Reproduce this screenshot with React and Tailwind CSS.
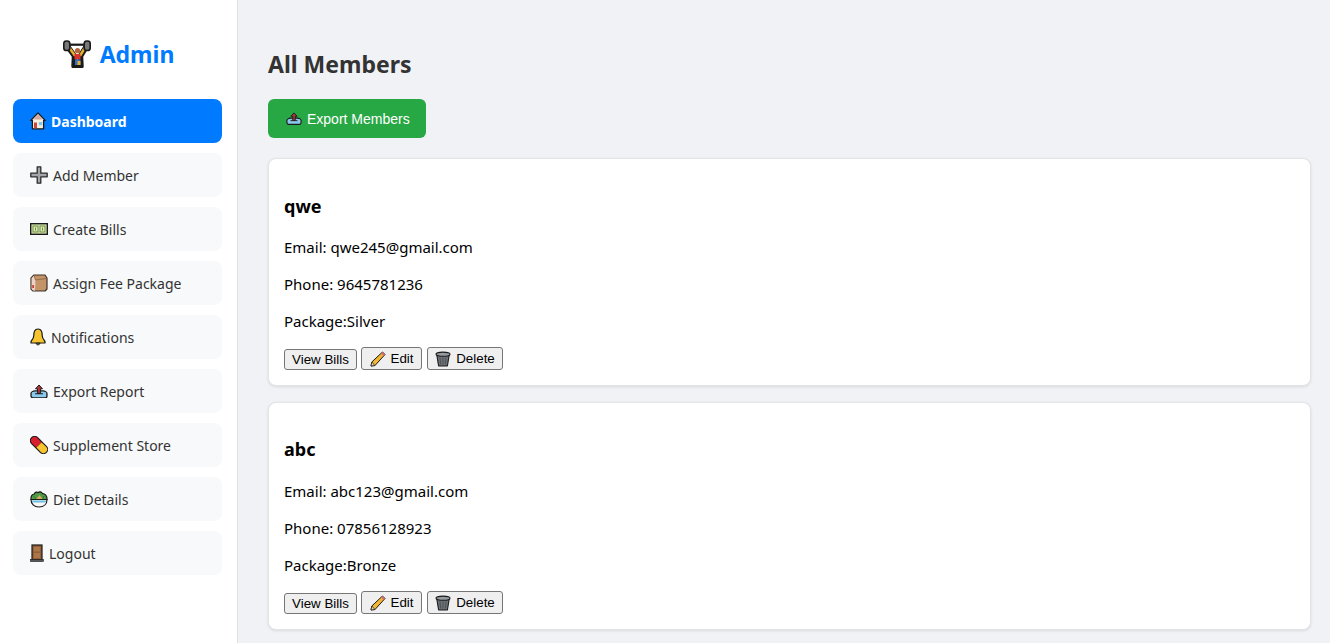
const K = "#1a1a1a";

const Lifter = () => (
  <svg width="28" height="28" viewBox="0 0 28 28" className="shrink-0">
    <path d="M5 7 L11.5 16 L11 26 L18 26 L17.5 16 L23 7" fill="none" stroke={K} strokeWidth="5.4" strokeLinejoin="round" />
    <path d="M5 6 L11.5 15 L17.5 15 L23 6" fill="none" stroke="#e9ae2f" strokeWidth="2.6" />
    <rect x="4" y="3.6" width="20" height="2.2" fill={K} />
    <rect x="0.8" y="1" width="6" height="9.5" rx="2.6" fill="#77787a" stroke={K} strokeWidth="1.6" />
    <rect x="21.2" y="1" width="6" height="9.5" rx="2.6" fill="#77787a" stroke={K} strokeWidth="1.6" />
    <circle cx="14.5" cy="10.5" r="2.6" fill="#b5673c" />
    <rect x="11.5" y="14" width="6" height="5.5" fill="#d8332c" />
    <rect x="12" y="19.5" width="5.5" height="5.5" fill="#2f6fc4" />
    <rect x="14.5" y="21" width="3" height="4" fill="#e9ae2f" />
  </svg>
);

const House = () => (
  <svg width="16" height="18" viewBox="0 0 16 18" className="shrink-0">
    <path d="M8 1 L15.2 8.4 L13.6 8.4 L13.6 16.8 L2.4 16.8 L2.4 8.4 L0.8 8.4 Z" fill="#f6efe2" stroke={K} strokeWidth="1.3" strokeLinejoin="round" />
    <path d="M8 2.6 L12.6 7.4 H3.4 Z" fill="#d9a79c" />
    <rect x="4" y="10.5" width="3" height="5.8" fill="#c9473d" />
    <rect x="8.8" y="10" width="3.4" height="3.2" fill="#7cc8e6" />
  </svg>
);

const Plus = () => (
  <svg width="18" height="18" viewBox="0 0 18 18" className="shrink-0">
    <path d="M7.2 0.8 H10.8 V7.2 H17.2 V10.8 H10.8 V17.2 H7.2 V10.8 H0.8 V7.2 H7.2 Z" fill="#a2a6aa" stroke="#2b2b2b" strokeWidth="1.3" strokeLinejoin="round" />
  </svg>
);

const Bill = () => (
  <svg width="18" height="12" viewBox="0 0 18 12" className="shrink-0">
    <rect x="0.7" y="0.7" width="16.6" height="10.6" fill="#dcebb0" stroke={K} strokeWidth="1.4" />
    <rect x="3" y="3" width="5" height="6" fill="none" stroke="#6e8a4a" strokeWidth="1" />
    <rect x="10" y="3" width="5" height="6" fill="none" stroke="#6e8a4a" strokeWidth="1" />
    <path d="M5.5 4.5 V7.5 M12.5 4.5 V7.5" stroke="#6e8a4a" strokeWidth="1" />
  </svg>
);

const Box = () => (
  <svg width="18" height="18" viewBox="0 0 18 18" className="shrink-0">
    <path d="M1 4 L4 1 L15 1 L17 4 L17 15 L15 17 L3 17 L1 15 Z" fill="#c49468" stroke="#3d3028" strokeWidth="1.2" strokeLinejoin="round" />
    <path d="M1.6 4 L4.2 1.6 L5.5 6 L5 16.4 L3 16.4 L1.6 15 Z" fill="#ecd2c6" />
    <path d="M5.5 6 L16.5 4.5 M4.2 1.6 L5.5 6" stroke="#8d6a45" strokeWidth="0.9" fill="none" />
    <rect x="2.2" y="11" width="1.8" height="3" fill="#c9473d" />
  </svg>
);

const Bell = () => (
  <svg width="16" height="18" viewBox="0 0 16 18" className="shrink-0">
    <path d="M8 1 C4.5 1 3.8 4 3.8 7.5 C3.8 10.5 2.2 12 1 13.4 L1 15 H15 L15 13.4 C13.8 12 12.2 10.5 12.2 7.5 C12.2 4 11.5 1 8 1 Z" fill="#f6c42f" stroke={K} strokeWidth="1.2" strokeLinejoin="round" />
    <path d="M6 15.2 C6.5 17.4 9.5 17.4 10 15.2 Z" fill="#c48b1c" stroke={K} strokeWidth="1" />
  </svg>
);

const Outbox = ({ size = 18 }) => (
  <svg width={size} height={size * 0.83} viewBox="0 0 18 15" className="shrink-0">
    <path d="M1 9.5 C1 8.2 3 7 5 7 H13 C15 7 17 8.2 17 9.5 V12 C17 13 16 14 15 14 H3 C2 14 1 13 1 12 Z" fill="#8cc8ec" stroke={K} strokeWidth="1.3" strokeLinejoin="round" />
    <path d="M5 9.8 H13" stroke={K} strokeWidth="1" />
    <path d="M9 1 L12.5 4.8 H10.4 V9.5 H7.6 V4.8 H5.5 Z" fill="#b4333a" stroke={K} strokeWidth="1" strokeLinejoin="round" />
  </svg>
);

const Pill = () => (
  <svg width="18" height="18" viewBox="0 0 18 18" className="shrink-0">
    <g transform="rotate(45 9 9)">
      <rect x="-2" y="4.2" width="22" height="9.6" rx="4.8" fill={K} />
      <path d="M9 5.3 H2.8 A3.7 3.7 0 0 0 2.8 12.7 H9 Z" fill="#d81f2e" />
      <path d="M9 5.3 H15.2 A3.7 3.7 0 0 1 15.2 12.7 H9 Z" fill="#f6c42f" />
    </g>
  </svg>
);

const Salad = () => (
  <svg width="18" height="18" viewBox="0 0 18 18" className="shrink-0">
    <path d="M1 9.5 C0.6 6 2.4 4 4.4 4 C5 2 7 1.6 8 2.6 C9.4 1.2 11.6 1.8 12.4 3.6 C14.8 3.4 17.4 6 17 9.5 Z" fill="#4f9c47" stroke={K} strokeWidth="1.2" strokeLinejoin="round" />
    <path d="M6.5 9 L9.5 5 L12.5 9 Z" fill="#dba765" />
    <path d="M4 6.5 L5.5 8.5 M14 6 L13 8.5" stroke="#2f6e2b" strokeWidth="1" />
    <path d="M1 9.5 H17 C17 14 14 17 9 17 C4 17 1 14 1 9.5 Z" fill="#f7f7f7" stroke={K} strokeWidth="1.2" />
    <path d="M1.8 10.4 H16.2 L15.4 12.4 H2.6 Z" fill="#6bbfde" />
  </svg>
);

const Door = () => (
  <svg width="14" height="18" viewBox="0 0 14 18" className="shrink-0">
    <rect x="2" y="1" width="10" height="15" fill="#94603a" stroke={K} strokeWidth="1.2" />
    <rect x="4" y="3" width="6" height="4.4" fill="#ad7648" />
    <rect x="4" y="9" width="6" height="5" fill="#ad7648" />
    <rect x="0.5" y="15.5" width="13" height="2" fill="#55565a" stroke={K} strokeWidth="0.6" />
  </svg>
);

const PencilIcon = () => (
  <svg width="16" height="16" viewBox="0 0 16 16" className="shrink-0">
    <path d="M12.5 1 L15 3.5 L5 14.5 L1 15 L1.8 11 Z" fill="#f2b632" stroke={K} strokeWidth="1" strokeLinejoin="round" />
    <path d="M1.8 11 L5 14.5 L1 15 Z" fill="#ecd6a8" stroke={K} strokeWidth="0.7" />
    <path d="M12.5 1 L15 3.5 L13.6 5 L11.1 2.5 Z" fill="#d66b73" />
  </svg>
);

const Trash = () => (
  <svg width="16" height="16" viewBox="0 0 16 16" className="shrink-0">
    <path d="M1.8 4 H14.2 L12.4 15 H3.6 Z" fill="#6c7277" stroke={K} strokeWidth="1.1" strokeLinejoin="round" />
    <ellipse cx="8" cy="3.2" rx="7" ry="2.1" fill="#969ba0" stroke={K} strokeWidth="1.1" />
    <path d="M5 6.5 L5.7 13.5 M8 6.5 V13.5 M11 6.5 L10.3 13.5" stroke="#44494d" strokeWidth="0.8" />
  </svg>
);

const nav = [
  { Icon: House, label: "Dashboard", active: true },
  { Icon: Plus, label: "Add Member" },
  { Icon: Bill, label: "Create Bills" },
  { Icon: Box, label: "Assign Fee Package" },
  { Icon: Bell, label: "Notifications" },
  { Icon: Outbox, label: "Export Report" },
  { Icon: Pill, label: "Supplement Store" },
  { Icon: Salad, label: "Diet Details" },
  { Icon: Door, label: "Logout" },
];

const members = [
  { name: "qwe", email: "qwe245@gmail.com", phone: "9645781236", pkg: "Silver" },
  { name: "abc", email: "abc123@gmail.com", phone: "07856128923", pkg: "Bronze" },
];

const btn =
  "flex items-center justify-center gap-[5px] bg-[#efefef] border border-[#767676] rounded-[3px] text-[13.33px] text-black font-['Liberation_Sans',sans-serif]";

function Card({ m }) {
  return (
    <div className="bg-white rounded-lg border border-[#e3e4e6] shadow-[0_1px_3px_rgba(0,0,0,0.1)] h-[228px] px-[15px] pt-[34.7px] text-[15px] leading-[20px] text-black">
      <h3 className="text-[18px] leading-[24px] font-bold">{m.name}</h3>
      <p className="mt-[19.3px]">Email: {m.email}</p>
      <p className="mt-[17px]">Phone: {m.phone}</p>
      <p className="mt-[17px]">Package:{m.pkg}</p>
      <div className="flex items-start mt-[16px]">
        <button className={`${btn} pt-[1px] w-[73px] h-[21px] mt-[2px]`}>View Bills</button>
        <button className={`${btn} pt-[2px] w-[61px] h-[23px] ml-[4px]`}><PencilIcon />Edit</button>
        <button className={`${btn} pt-[2px] w-[76px] h-[23px] ml-[5px]`}><Trash />Delete</button>
      </div>
    </div>
  );
}

export default function App() {
  return (
    <div className="flex h-[643px] overflow-hidden bg-[#f0f2f5] font-['Noto_Sans','Open_Sans',sans-serif]">
      <aside className="w-[238px] shrink-0 bg-white border-r border-[#dfe1e5] pl-[13px] pr-[15px] pt-[38px]">
        <div className="flex items-center justify-center gap-[9px] h-[32px] mb-[29px] pl-[2px]">
          <Lifter />
          <span className="text-[23px] leading-[32px] font-bold text-[#007bff]">Admin</span>
        </div>
        <nav className="flex flex-col gap-[10px]">
          {nav.map(({ Icon, label, active }) => (
            <div
              key={label}
              className={`flex items-center gap-[5px] h-[44px] pl-[17px] rounded-lg text-sm ${
                active ? "bg-[#007bff] text-white font-bold" : "bg-[#f8f9fa] text-[#333333]"
              }`}
            >
              <Icon />
              <span className="pt-[2px]">{label}</span>
            </div>
          ))}
        </nav>
      </aside>
      <main className="flex-1 min-w-0 pl-[30px] pr-[19px] pt-[48px]">
        <h2 className="text-[23px] leading-[32px] font-bold text-[#333333]">All Members</h2>
        <button className="flex items-center gap-[5px] w-[158px] h-[39px] mt-[19px] pl-[18px] pt-[1px] bg-[#28a745] text-white rounded-md text-sm font-['Liberation_Sans',sans-serif]">
          <Outbox size={16} />
          Export Members
        </button>
        <div className="flex flex-col gap-[15.6px] mt-[20px]">
          {members.map((m) => (
            <Card key={m.name} m={m} />
          ))}
        </div>
      </main>
    </div>
  );
}
